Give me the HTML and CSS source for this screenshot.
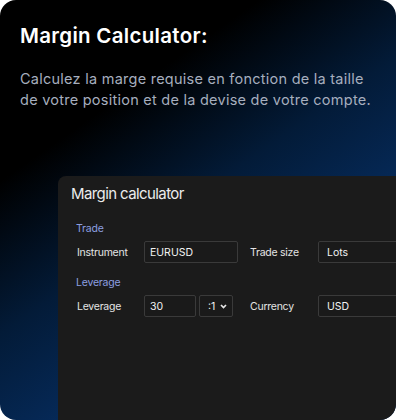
FILE: index.html
```html
<!DOCTYPE html>
<html lang="fr">
<head>
    <meta charset="UTF-8">
    <meta name="viewport" content="width=device-width, initial-scale=1.0">
    <title>Margin Calculator</title>
    <link rel="stylesheet" href="styles.css">
</head>
<body>
    <div class="card">
        <h1>Margin Calculator:</h1>
        <p class="intro">Calculez la marge requise en fonction de la taille de votre position et de la devise de votre compte.</p>

        <div class="panel">
            <h2>Margin calculator</h2>

            <div class="section-title">Trade</div>
            <div class="row">
                <label class="field-label">Instrument</label>
                <div class="field">
                    <div class="input wide">EURUSD</div>
                </div>
                <label class="field-label second">Trade size</label>
                <div class="input grow">Lots</div>
            </div>

            <div class="section-title">Leverage</div>
            <div class="row">
                <label class="field-label">Leverage</label>
                <div class="field">
                    <div class="input short">30</div>
                    <div class="input select">:1
                        <svg width="7" height="5" viewBox="0 0 7 5"><path d="M1 1 L3.5 3.5 L6 1" fill="none" stroke="#e6e6e6" stroke-width="1.7"/></svg>
                    </div>
                </div>
                <label class="field-label second">Currency</label>
                <div class="input grow">USD</div>
            </div>
        </div>
    </div>
</body>
</html>
```

FILE: styles.css
```css
body {
    margin: 0;
    background: #fff;
    font-family: Inter, "Open Sans", sans-serif;
}

.card {
    width: 396px;
    height: 420px;
    box-sizing: border-box;
    padding: 22px 20px 0 20px;
    border-radius: 16px;
    overflow: hidden;
    background: linear-gradient(145deg, #000 0%, #000 26%, #031b38 48%, #062c5e 70%, #0a3874 100%);
}

h1 {
    margin: 0;
    color: #fff;
    font-size: 20.5px;
    font-weight: 600;
    line-height: 28px;
    letter-spacing: 0.3px;
}

.intro {
    margin: 18px 0 0 0;
    color: #a6aebe;
    font-size: 14.5px;
    line-height: 21px;
    letter-spacing: 0.25px;
}

.panel {
    margin: 66px -40px 0 38px;
    height: 300px;
    padding: 8px 13px;
    background: #1b1b1b;
    border-radius: 8px 0 0 0;
}

h2 {
    margin: 0;
    color: #ececec;
    font-size: 15px;
    font-weight: 400;
    line-height: 20px;
    letter-spacing: -0.6px;
}

.section-title {
    margin: 18px 0 0 5px;
    color: #8c9fe0;
    font-size: 10.5px;
    line-height: 14px;
    letter-spacing: -0.2px;
}

.section-title + .row {
    margin-top: 5px;
}

.row + .section-title {
    margin-top: 13px;
}

.row {
    display: flex;
    align-items: center;
}

.field-label {
    width: 67px;
    margin-left: 6px;
    color: #e4e4e4;
    font-size: 10.5px;
    letter-spacing: -0.25px;
}

.field-label.second {
    width: 68px;
    margin-left: 12px;
}

.field {
    width: 94px;
    display: flex;
    gap: 3px;
}

.input {
    box-sizing: border-box;
    height: 22px;
    padding: 0 5px;
    display: flex;
    align-items: center;
    border: 1px solid #3a3a3a;
    border-radius: 2px;
    background: #1a1a1a;
    color: #f2f2f2;
    font-size: 10.5px;
}

.input.wide {
    width: 94px;
}

.input.short {
    width: 52px;
}

.input.select {
    width: 34px;
    padding: 0 5px 0 8px;
    justify-content: space-between;
}

.input.grow {
    flex: 1;
    padding-left: 8px;
}
```
